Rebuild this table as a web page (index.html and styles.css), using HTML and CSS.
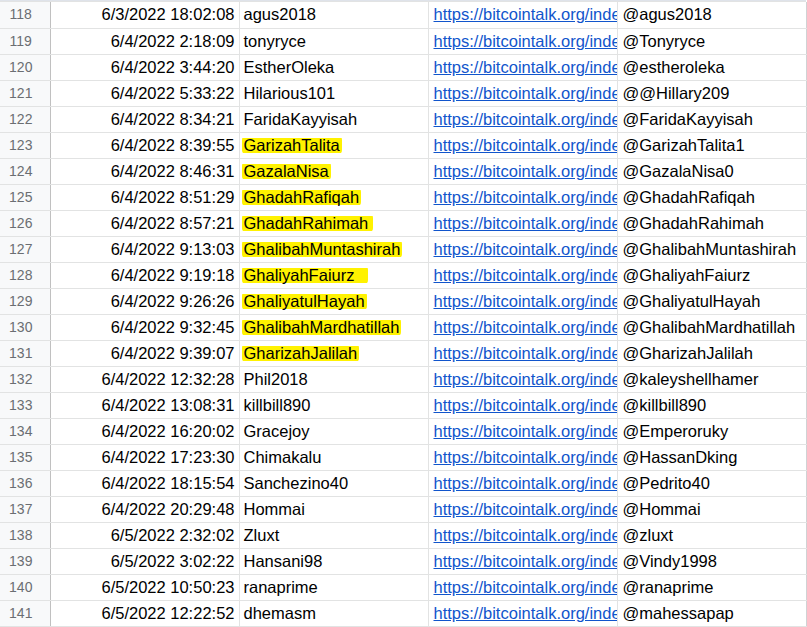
FILE: index.html
```html
<!DOCTYPE html>
<html lang="en">
<head>
<meta charset="UTF-8">
<title>Sheet</title>
<link rel="stylesheet" href="styles.css">
</head>
<body>
<div class="sheet">
    <div class="topline"></div>
    <table class="grid">
        <colgroup>
            <col class="c-num">
            <col class="c-data">
            <col class="c-data">
            <col class="c-data">
            <col class="c-data">
        </colgroup>
        <tr><td class="num">118</td><td class="date">6/3/2022 18:02:08</td><td class="name">agus2018</td><td class="link"><a href="#">https://bitcointalk.org/index.php?action=profile;u=3396701</a></td><td class="handle">@agus2018</td></tr>
        <tr><td class="num">119</td><td class="date">6/4/2022 2:18:09</td><td class="name">tonyryce</td><td class="link"><a href="#">https://bitcointalk.org/index.php?action=profile;u=3400147</a></td><td class="handle">@Tonyryce</td></tr>
        <tr><td class="num">120</td><td class="date">6/4/2022 3:44:20</td><td class="name">EstherOleka</td><td class="link"><a href="#">https://bitcointalk.org/index.php?action=profile;u=3401622</a></td><td class="handle">@estheroleka</td></tr>
        <tr><td class="num">121</td><td class="date">6/4/2022 5:33:22</td><td class="name">Hilarious101</td><td class="link"><a href="#">https://bitcointalk.org/index.php?action=profile;u=3402210</a></td><td class="handle">@@Hillary209</td></tr>
        <tr><td class="num">122</td><td class="date">6/4/2022 8:34:21</td><td class="name">FaridaKayyisah</td><td class="link"><a href="#">https://bitcointalk.org/index.php?action=profile;u=3403355</a></td><td class="handle">@FaridaKayyisah</td></tr>
        <tr><td class="num">123</td><td class="date">6/4/2022 8:39:55</td><td class="name"><span class="hl">GarizahTalita</span></td><td class="link"><a href="#">https://bitcointalk.org/index.php?action=profile;u=3403360</a></td><td class="handle">@GarizahTalita1</td></tr>
        <tr><td class="num">124</td><td class="date">6/4/2022 8:46:31</td><td class="name"><span class="hl">GazalaNisa</span></td><td class="link"><a href="#">https://bitcointalk.org/index.php?action=profile;u=3403364</a></td><td class="handle">@GazalaNisa0</td></tr>
        <tr><td class="num">125</td><td class="date">6/4/2022 8:51:29</td><td class="name"><span class="hl">GhadahRafiqah</span></td><td class="link"><a href="#">https://bitcointalk.org/index.php?action=profile;u=3403368</a></td><td class="handle">@GhadahRafiqah</td></tr>
        <tr><td class="num">126</td><td class="date">6/4/2022 8:57:21</td><td class="name"><span class="hl wide-s">GhadahRahimah</span></td><td class="link"><a href="#">https://bitcointalk.org/index.php?action=profile;u=3403371</a></td><td class="handle">@GhadahRahimah</td></tr>
        <tr><td class="num">127</td><td class="date">6/4/2022 9:13:03</td><td class="name"><span class="hl">GhalibahMuntashirah</span></td><td class="link"><a href="#">https://bitcointalk.org/index.php?action=profile;u=3403380</a></td><td class="handle">@GhalibahMuntashirah</td></tr>
        <tr><td class="num">128</td><td class="date">6/4/2022 9:19:18</td><td class="name"><span class="hl wide-l">GhaliyahFaiurz</span></td><td class="link"><a href="#">https://bitcointalk.org/index.php?action=profile;u=3403384</a></td><td class="handle">@GhaliyahFaiurz</td></tr>
        <tr><td class="num">129</td><td class="date">6/4/2022 9:26:26</td><td class="name"><span class="hl">GhaliyatulHayah</span></td><td class="link"><a href="#">https://bitcointalk.org/index.php?action=profile;u=3403389</a></td><td class="handle">@GhaliyatulHayah</td></tr>
        <tr><td class="num">130</td><td class="date">6/4/2022 9:32:45</td><td class="name"><span class="hl">GhalibahMardhatillah</span></td><td class="link"><a href="#">https://bitcointalk.org/index.php?action=profile;u=3403392</a></td><td class="handle">@GhalibahMardhatillah</td></tr>
        <tr><td class="num">131</td><td class="date">6/4/2022 9:39:07</td><td class="name"><span class="hl">GharizahJalilah</span></td><td class="link"><a href="#">https://bitcointalk.org/index.php?action=profile;u=3403396</a></td><td class="handle">@GharizahJalilah</td></tr>
        <tr><td class="num">132</td><td class="date">6/4/2022 12:32:28</td><td class="name">Phil2018</td><td class="link"><a href="#">https://bitcointalk.org/index.php?action=profile;u=3403452</a></td><td class="handle">@kaleyshellhamer</td></tr>
        <tr><td class="num">133</td><td class="date">6/4/2022 13:08:31</td><td class="name">killbill890</td><td class="link"><a href="#">https://bitcointalk.org/index.php?action=profile;u=3403470</a></td><td class="handle">@killbill890</td></tr>
        <tr><td class="num">134</td><td class="date">6/4/2022 16:20:02</td><td class="name">Gracejoy</td><td class="link"><a href="#">https://bitcointalk.org/index.php?action=profile;u=3403518</a></td><td class="handle">@Emperoruky</td></tr>
        <tr><td class="num">135</td><td class="date">6/4/2022 17:23:30</td><td class="name">Chimakalu</td><td class="link"><a href="#">https://bitcointalk.org/index.php?action=profile;u=3403539</a></td><td class="handle">@HassanDking</td></tr>
        <tr><td class="num">136</td><td class="date">6/4/2022 18:15:54</td><td class="name">Sanchezino40</td><td class="link"><a href="#">https://bitcointalk.org/index.php?action=profile;u=3403552</a></td><td class="handle">@Pedrito40</td></tr>
        <tr><td class="num">137</td><td class="date">6/4/2022 20:29:48</td><td class="name">Hommai</td><td class="link"><a href="#">https://bitcointalk.org/index.php?action=profile;u=3403581</a></td><td class="handle">@Hommai</td></tr>
        <tr><td class="num">138</td><td class="date">6/5/2022 2:32:02</td><td class="name">Zluxt</td><td class="link"><a href="#">https://bitcointalk.org/index.php?action=profile;u=3403640</a></td><td class="handle">@zluxt</td></tr>
        <tr><td class="num">139</td><td class="date">6/5/2022 3:02:22</td><td class="name">Hansani98</td><td class="link"><a href="#">https://bitcointalk.org/index.php?action=profile;u=3403645</a></td><td class="handle">@Vindy1998</td></tr>
        <tr><td class="num">140</td><td class="date">6/5/2022 10:50:23</td><td class="name">ranaprime</td><td class="link"><a href="#">https://bitcointalk.org/index.php?action=profile;u=3403702</a></td><td class="handle">@ranaprime</td></tr>
        <tr><td class="num">141</td><td class="date">6/5/2022 12:22:52</td><td class="name">dhemasm</td><td class="link"><a href="#">https://bitcointalk.org/index.php?action=profile;u=3403731</a></td><td class="handle">@mahessapap</td></tr>
    </table>
</div>
</body>
</html>
```

FILE: styles.css
```css
body {
    margin: 0;
    background: #fff;
    font-family: "Liberation Sans", Arial, sans-serif;
}
.sheet {
    width: 806px;
}
.topline {
    height: 1px;
    background-color: #dfe3ea;
    border-bottom: 1px solid #e2e3e3;
}
.grid {
    border-collapse: collapse;
    table-layout: fixed;
    width: 806px;
}
.c-num {
    width: 50px;
}
.c-data {
    width: 189px;
}
.grid tr {
    height: 26px;
}
.grid td {
    height: 25px;
    padding: 0 3px 0 4px;
    border-right: 1px solid #e2e3e3;
    border-bottom: 1px solid #e2e3e3;
    font-size: 16.5px;
    line-height: 25px;
    color: #000;
    white-space: nowrap;
    overflow: hidden;
    vertical-align: middle;
}
.grid td.num {
    background-color: #f8f9fa;
    border-right: 1px solid #c0c0c0;
    color: #6b6e72;
    font-size: 14px;
    text-align: center;
    padding: 0 8px 0 0;
}
.grid td.date {
    text-align: right;
    padding-right: 4px;
}
.grid td.link {
    padding-left: 5px;
    text-overflow: clip;
}
.grid td.link a {
    color: #1155cc;
    text-decoration: underline;
}
.grid td.handle {
    padding-left: 5px;
    border-right-color: #d0d2d4;
}
.hl {
    background: linear-gradient(to bottom, transparent 2px, #fff200 2px, #fff200 calc(100% - 1px), transparent calc(100% - 1px));
    border-radius: 4px;
    padding: 0 2px 0 2px;
    margin-left: -2px;
}
.hl.wide-s {
    padding-right: 5px;
}
.hl.wide-l {
    padding-right: 14px;
}
```
